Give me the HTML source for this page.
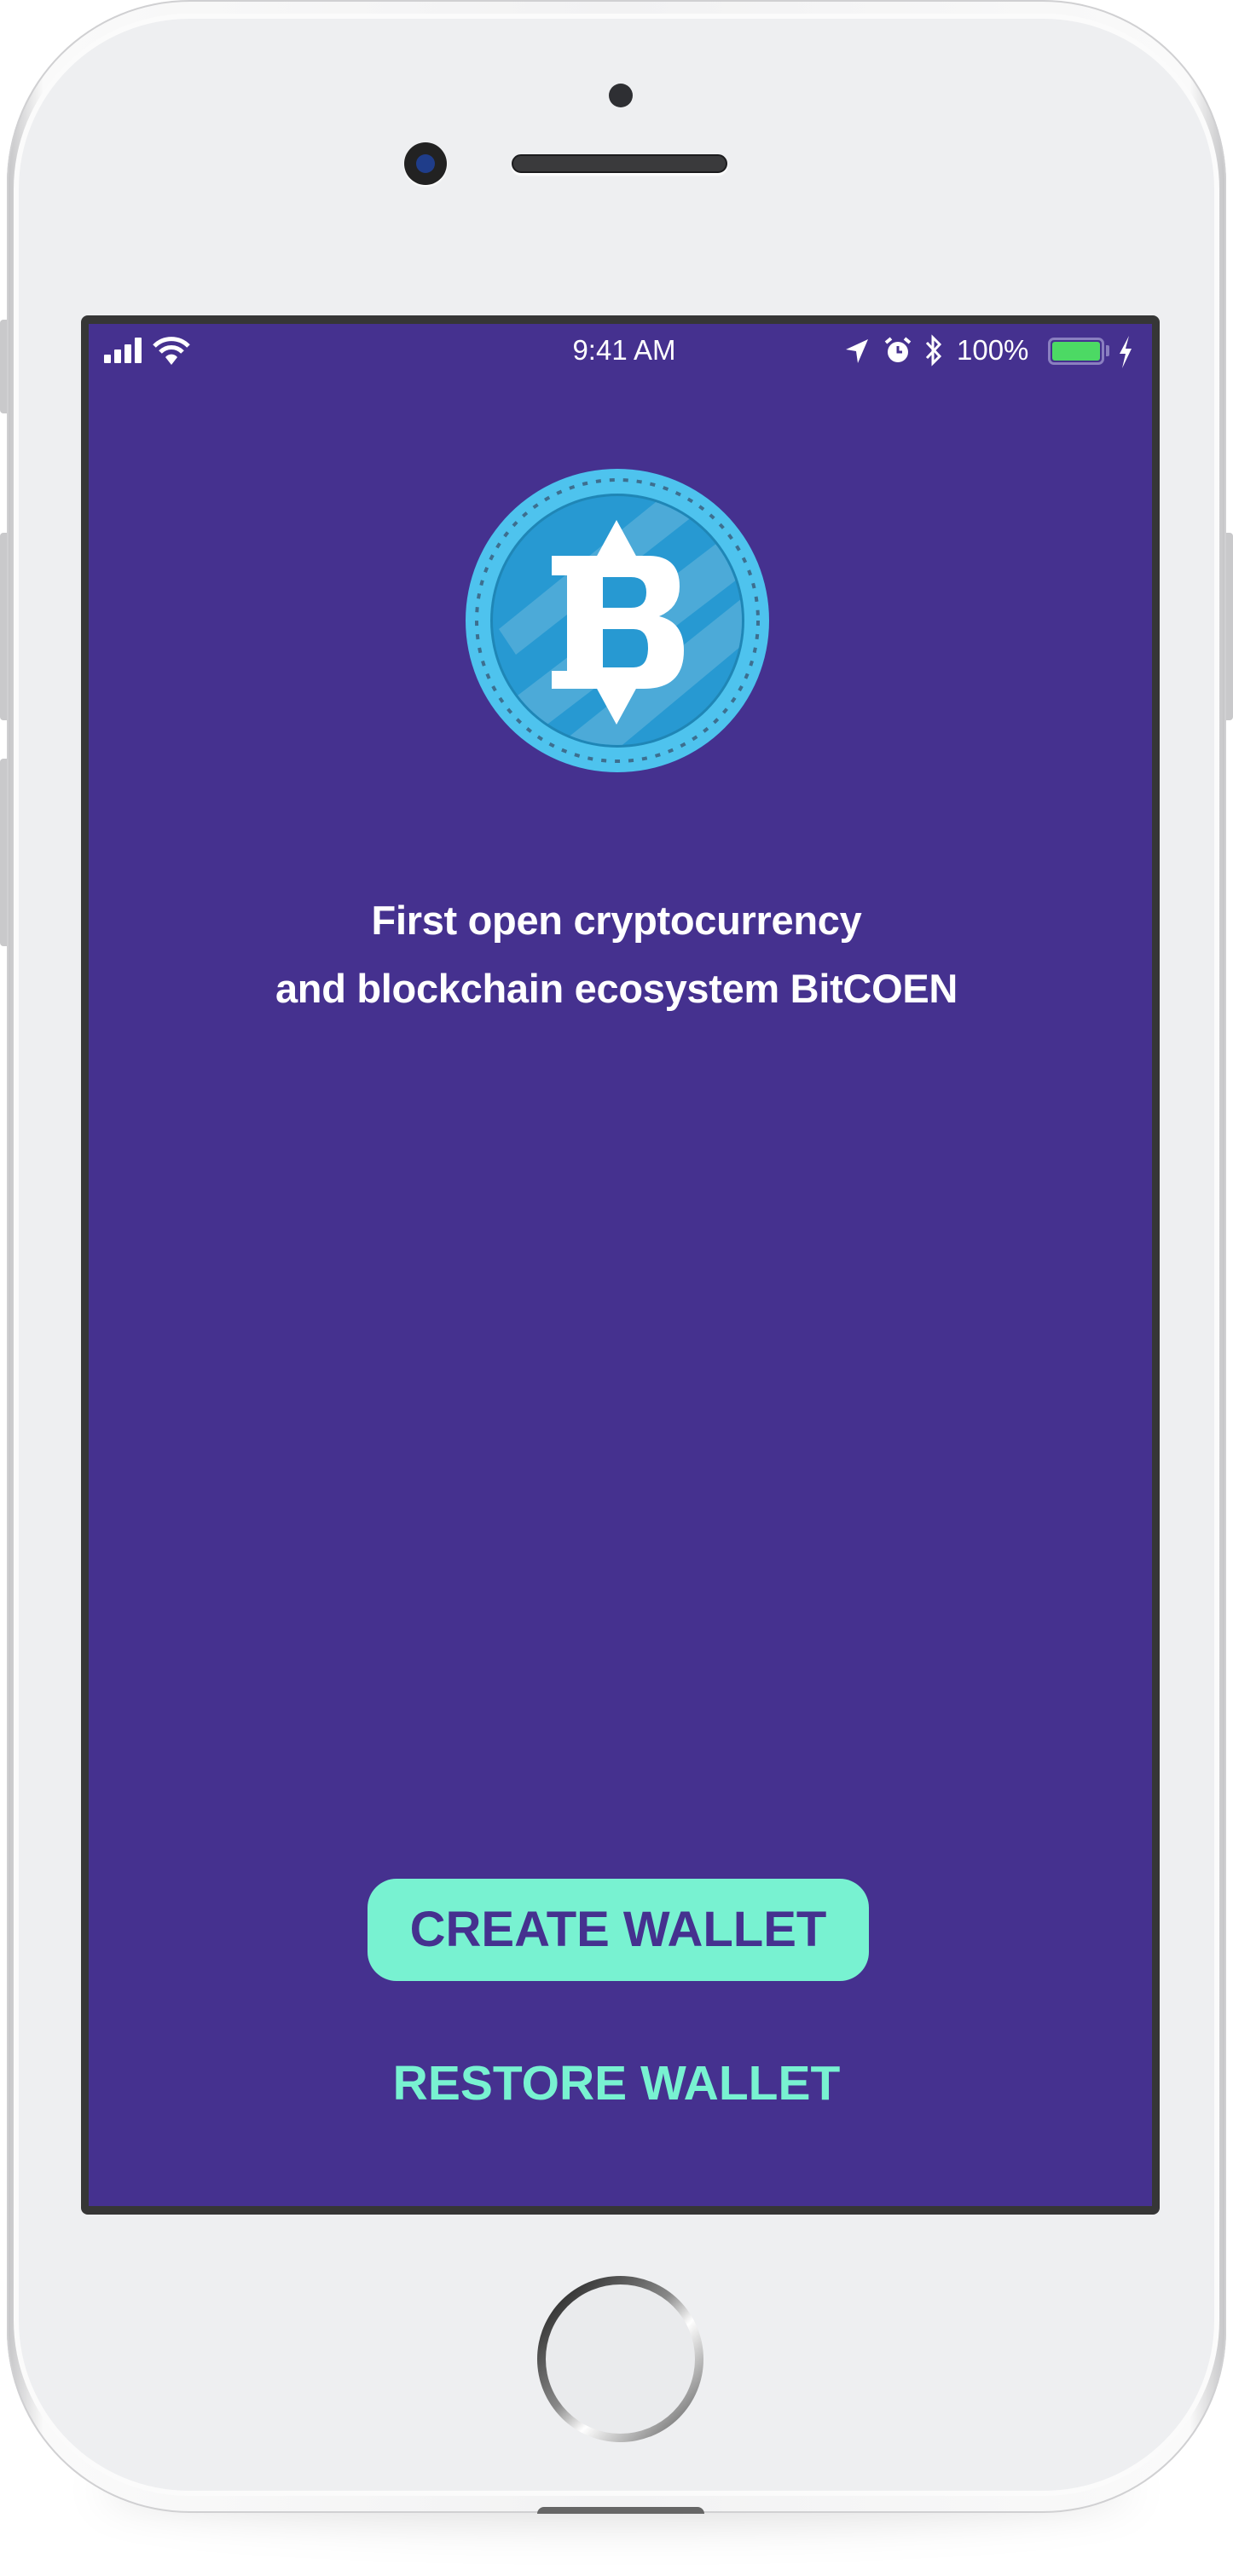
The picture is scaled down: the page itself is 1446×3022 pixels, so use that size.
<!DOCTYPE html>
<html><head><meta charset="utf-8"><style>
*{margin:0;padding:0;box-sizing:border-box}
body{width:1446px;height:3022px;background:#fff;position:relative;overflow:hidden;font-family:"Liberation Sans",sans-serif}
.abs{position:absolute}
</style></head><body>
<div class="abs" style="left:120px;top:2880px;width:1206px;height:80px;border-radius:50%;background:rgba(0,0,0,0.12);filter:blur(25px)"></div>
<div class="abs" style="left:0;top:375px;width:12px;height:110px;background:#c9c9cb;border-radius:4px"></div>
<div class="abs" style="left:0;top:625px;width:12px;height:220px;background:#c9c9cb;border-radius:4px"></div>
<div class="abs" style="left:0;top:890px;width:12px;height:220px;background:#c9c9cb;border-radius:4px"></div>
<div class="abs" style="right:0;top:625px;width:12px;height:220px;background:#c9c9cb;border-radius:4px"></div>
<div class="abs" style="left:8px;top:0;width:1430px;height:2948px;border-radius:215px;background:linear-gradient(90deg,#c4c4c6,#fafafa 3%,#f2f2f3 50%,#fafafa 97%,#c4c4c6);box-shadow:inset 0 0 0 2px #d0d0d2"></div>
<div class="abs" style="left:22px;top:22px;width:1402px;height:2900px;border-radius:200px;background:#eeeff1;box-shadow:0 0 0 6px #fbfbfb"></div>
<div class="abs" style="left:714px;top:98px;width:28px;height:28px;border-radius:50%;background:#2e2f33"></div>
<div class="abs" style="left:474px;top:167px;width:50px;height:50px;border-radius:50%;background:#222;box-shadow:0 2px 2px #fff"></div>
<div class="abs" style="left:488px;top:181px;width:22px;height:22px;border-radius:50%;background:#1f3d8a"></div>
<div class="abs" style="left:600px;top:181px;width:253px;height:22px;border-radius:11px;background:#3a3a3c;border:2px solid #1c1c1e;box-shadow:0 3px 2px #fff"></div>
<div class="abs" style="left:95px;top:370px;width:1265px;height:2228px;background:#363636;border-radius:8px"></div>
<div class="abs" style="left:104px;top:380px;width:1247px;height:2208px;background:#45318f"></div>
<div class="abs" style="left:122px;top:396px;width:48px;height:30px">
 <div class="abs" style="left:0;top:20px;width:8px;height:10px;background:#fff;border-radius:1px"></div>
 <div class="abs" style="left:12px;top:14px;width:8px;height:16px;background:#fff;border-radius:1px"></div>
 <div class="abs" style="left:24px;top:8px;width:8px;height:22px;background:#fff;border-radius:1px"></div>
 <div class="abs" style="left:36px;top:0;width:8px;height:30px;background:#fff;border-radius:1px"></div>
</div>
<svg class="abs" style="left:178px;top:394px" width="46" height="36" viewBox="0 0 46 36"><path d="M3 12 A28 28 0 0 1 43 12" stroke="#fff" stroke-width="5" fill="none"/><path d="M10 19 A18 18 0 0 1 36 19" stroke="#fff" stroke-width="5" fill="none"/><path d="M16 25 L23 34 L30 25 A9 9 0 0 0 16 25Z" fill="#fff"/></svg>
<div class="abs" style="left:600px;top:392px;width:264px;text-align:center;color:#fff;font-size:33px">9:41 AM</div>
<svg class="abs" style="left:990px;top:396px" width="30" height="32" viewBox="0 0 30 32"><path d="M28 2 L2 14 L14 16 L16 30Z" fill="#fff"/></svg>
<svg class="abs" style="left:1036px;top:394px" width="34" height="34" viewBox="0 0 34 34"><circle cx="17" cy="19" r="12" fill="#fff"/><path d="M17 12 V19 H22" stroke="#45318f" stroke-width="3" fill="none"/><path d="M3 8 L9 3 M31 8 L25 3" stroke="#fff" stroke-width="4"/></svg>
<svg class="abs" style="left:1084px;top:392px" width="22" height="38" viewBox="0 0 22 38"><path d="M3 10 L18 26 L10 34 V4 L18 12 L3 28" stroke="#fff" stroke-width="3" fill="none"/></svg>
<div class="abs" style="left:1122px;top:392px;color:#fff;font-size:33px">100%</div>
<div class="abs" style="left:1229px;top:396px;width:66px;height:32px;border:3px solid #8a7fc0;border-radius:7px;padding:2px"><div style="width:100%;height:100%;background:#4cd964;border-radius:3px"></div></div>
<div class="abs" style="left:1297px;top:405px;width:4px;height:13px;background:#8a7fc0;border-radius:0 2px 2px 0"></div>
<svg class="abs" style="left:1310px;top:394px" width="20" height="38" viewBox="0 0 20 38"><path d="M14 0 L3 21 H10 L6 38 L17 15 H10Z" fill="#fff"/></svg>
<svg class="abs" style="left:545px;top:548px" width="358" height="360" viewBox="0 0 358 360">
 <defs><clipPath id="c"><circle cx="179" cy="180" r="146"/></clipPath></defs>
 <circle cx="179" cy="180" r="178" fill="#4ec3ee"/>
 <circle cx="179" cy="180" r="165" fill="none" stroke="#3d6f8f" stroke-width="4" stroke-dasharray="6 10"/>
 <circle cx="179" cy="180" r="149" fill="#1f86b6"/>
 <circle cx="179" cy="180" r="146" fill="#2799d2"/>
 <g clip-path="url(#c)" fill="#4caad8">
  <polygon points="360,40 400,70 60,330 20,300"/>
  <polygon points="330,150 360,180 120,380 80,350"/>
  <polygon points="250,20 290,40 60,220 40,190"/>
 </g>
 <path d="M178 62 L202 106 L154 106Z M178 302 L202 258 L154 258Z" fill="#fff"/>
 <path d="M102 104 H215 Q252 104 252 140 Q252 165 228 175 Q257 182 257 215 Q257 260 210 260 H102 V239 H120 V127 H102Z" fill="#fff"/>
 <path d="M162 129 H195 Q213 129 213 147 Q213 165 195 165 H162Z M162 190 H198 Q215 190 215 212 Q215 235 198 235 H162Z" fill="#2799d2"/>
</svg>
<div class="abs" style="left:0;top:1040px;width:1446px;text-align:center;color:#fff;font-weight:bold;font-size:47px;line-height:80px;letter-spacing:-0.3px">First open cryptocurrency<br>and blockchain ecosystem BitCOEN</div>
<div class="abs" style="left:431px;top:2204px;width:588px;height:120px;border-radius:34px;background:#78f2d1;color:#45318f;font-weight:bold;font-size:58px;line-height:120px;text-align:center">CREATE WALLET</div>
<div class="abs" style="left:0;top:2406px;width:1446px;text-align:center;color:#78f2d1;font-weight:bold;font-size:57px;line-height:76px">RESTORE WALLET</div>
<div class="abs" style="left:630px;top:2670px;width:195px;height:195px;border-radius:50%;background:linear-gradient(135deg,#111,#888 45%,#fff 60%,#444);padding:10px">
 <div style="width:100%;height:100%;border-radius:50%;background:#eaebed"></div>
</div>
<div class="abs" style="left:630px;top:2941px;width:196px;height:8px;background:#666;border-radius:8px 8px 0 0"></div>
</body></html>
